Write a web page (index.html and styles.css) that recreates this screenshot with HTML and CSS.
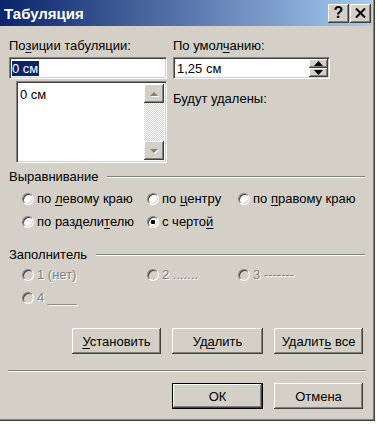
FILE: index.html
```html
<!DOCTYPE html>
<html lang="ru">
  <head>
    <meta charset="UTF-8" />
    <title>Табуляция</title>
    <link rel="stylesheet" href="styles.css">
  </head>
  <body>
    <div class="dialog">
      <!-- Title bar -->
      <div class="titlebar">
        <span class="title">Табуляция</span>
        <div class="caption-btns">
          <div class="cap-btn"><span class="help">?</span></div>
          <div class="cap-btn">
            <svg width="11" height="10" viewBox="0 0 11 10">
              <path d="M1 0.5 L10 9.5 M10 0.5 L1 9.5" stroke="#000" stroke-width="2" fill="none" />
            </svg>
          </div>
        </div>
      </div>

      <div class="body">
        <!-- Tab stop positions -->
        <div class="top">
          <div class="col-left">
            <div class="label">По<u>з</u>иции табуляции:</div>
            <div class="field"><span class="sel">0 см</span></div>
            <div class="listbox">
              <div class="items">0 см</div>
              <div class="scrollbar">
                <div class="sb-btn">
                  <svg width="9" height="6" viewBox="0 0 9 6">
                    <polygon points="5,2 9,6 1,6" fill="#fff" />
                    <polygon points="4,1 8,5 0,5" fill="#808080" />
                  </svg>
                </div>
                <div class="sb-track"></div>
                <div class="sb-btn">
                  <svg width="9" height="6" viewBox="0 0 9 6">
                    <polygon points="1,2 9,2 5,6" fill="#fff" />
                    <polygon points="0,1 8,1 4,5" fill="#808080" />
                  </svg>
                </div>
              </div>
            </div>
          </div>
          <div class="col-right">
            <div class="label">По умол<u>ч</u>анию:</div>
            <div class="field spin">
              <span class="spin-value">1,25 см</span>
              <div class="spin-btns">
                <div class="spin-btn">
                  <svg width="9" height="5" viewBox="0 0 9 5"><polygon points="4.5,0 9,5 0,5" fill="#000" /></svg>
                </div>
                <div class="spin-btn">
                  <svg width="9" height="5" viewBox="0 0 9 5"><polygon points="0,0 9,0 4.5,5" fill="#000" /></svg>
                </div>
              </div>
            </div>
            <div class="note">Будут удалены:</div>
          </div>
        </div>

        <!-- Alignment -->
        <div class="group-head">
          <span>Выравнивание</span>
          <div class="etch"></div>
        </div>
        <div class="options">
          <div class="opt"><span class="radio"></span><span>по <u>л</u>евому краю</span></div>
          <div class="opt"><span class="radio"></span><span>по <u>ц</u>ентру</span></div>
          <div class="opt"><span class="radio"></span><span>по <u>п</u>равому краю</span></div>
          <div class="opt"><span class="radio"></span><span>по раздели<u>т</u>елю</span></div>
          <div class="opt"><span class="radio checked"></span><span>с черто<u>й</u></span></div>
        </div>

        <!-- Leader -->
        <div class="group-head leader-head">
          <span>Заполнитель</span>
          <div class="etch"></div>
        </div>
        <div class="options disabled">
          <div class="opt"><span class="radio"></span><span>1 (нет)</span></div>
          <div class="opt"><span class="radio"></span><span>2 .......</span></div>
          <div class="opt"><span class="radio"></span><span>3 -------</span></div>
          <div class="opt"><span class="radio"></span><span>4 ____</span></div>
        </div>

        <!-- Actions -->
        <div class="btn-row actions">
          <div class="btn"><span><u>У</u>становить</span></div>
          <div class="btn wide"><span>Уд<u>а</u>лить</span></div>
          <div class="btn"><span>Удалит<u>ь</u> все</span></div>
        </div>
        <div class="separator"></div>
        <div class="btn-row">
          <div class="btn wide default"><span>ОК</span></div>
          <div class="btn"><span>Отмена</span></div>
        </div>
      </div>
    </div>
  </body>
</html>
```

FILE: styles.css
```css
/* Page and dialog frame */
body {
  margin: 0;
  background: #fff;
  font-family: "Liberation Sans", Arial, sans-serif;
  font-size: 13px;
  color: #000;
}

u {
  text-decoration: underline;
  text-underline-offset: 2px;
}

.dialog {
  width: 374px;
  height: 420px;
  background: #d4d0c8;
  border-right: 1px solid #404040;
  border-bottom: 1px solid #404040;
  box-shadow: inset -1px -1px #808080;
}

/* Title bar */
.titlebar {
  height: 26px;
  margin-right: 2px;
  padding: 0 1px 0 4px;
  display: flex;
  align-items: center;
  justify-content: space-between;
  background: linear-gradient(to right, #0a246a, #a6caf0);
}

.title {
  color: #fff;
  font-weight: bold;
  font-size: 15px;
}

.caption-btns {
  display: flex;
  gap: 1px;
}

.cap-btn {
  width: 21px;
  height: 19px;
  box-sizing: border-box;
  display: flex;
  align-items: center;
  justify-content: center;
  background: #d4d0c8;
  box-shadow: inset -1px -1px #404040, inset 1px 1px #fff, inset -2px -2px #808080;
}

.help {
  font-weight: bold;
  font-size: 16px;
  line-height: 16px;
}

/* Dialog body */
.body {
  padding: 12px 0 0 9px;
}

.label {
  line-height: 15px;
  height: 15px;
}

.top {
  display: flex;
  gap: 6px;
}

.col-left {
  width: 158px;
}

.col-right {
  width: 157px;
}

/* Sunken edit field */
.field {
  height: 22px;
  margin-top: 4px;
  box-sizing: border-box;
  background: #fff;
  border: 1px solid;
  border-color: #808080 #fff #fff #808080;
  box-shadow: inset 1px 1px #404040, inset -1px -1px #d4d0c8;
  padding: 3px 2px;
  line-height: 15px;
  display: flex;
  align-items: center;
}

.sel {
  background: #0a246a;
  color: #fff;
  padding: 0 1px 0 0;
  line-height: 15px;
}

.spin {
  padding: 2px 1px 2px 3px;
  justify-content: space-between;
}

.spin-btns {
  display: flex;
  flex-direction: column;
  width: 19px;
  height: 18px;
}

.spin-btn {
  flex: 1;
  display: flex;
  align-items: center;
  justify-content: center;
  background: #d4d0c8;
  box-shadow: inset -1px -1px #404040, inset 1px 1px #fff, inset -2px -2px #808080;
}

.note {
  margin-top: 12px;
  line-height: 15px;
}

/* List box with scrollbar */
.listbox {
  width: 151px;
  height: 82px;
  margin: 2px 0 0 7px;
  box-sizing: border-box;
  background: #fff;
  border: 1px solid;
  border-color: #808080 #fff #fff #808080;
  box-shadow: inset 1px 1px #404040, inset -1px -1px #d4d0c8;
  padding: 2px;
  display: flex;
}

.items {
  flex: 1;
  padding: 3px 1px;
  line-height: 15px;
}

.scrollbar {
  width: 20px;
  display: flex;
  flex-direction: column;
}

.sb-btn {
  height: 19px;
  display: flex;
  align-items: center;
  justify-content: center;
  background: #d4d0c8;
  box-shadow: inset -1px -1px #404040, inset 1px 1px #fff, inset -2px -2px #808080;
}

.sb-track {
  flex: 1;
  background: repeating-conic-gradient(#fff 0 25%, #d4d0c8 0 50%) 0 0 / 2px 2px;
}

/* Group headers with etched line */
.group-head {
  display: flex;
  align-items: center;
  gap: 9px;
  height: 15px;
  margin: 6px 9px 0 0;
}

.leader-head {
  margin-top: 14px;
}

.etch {
  flex: 1;
  height: 0;
  border-top: 1px solid #808080;
  border-bottom: 1px solid #fff;
}

/* Radio options */
.options {
  display: grid;
  grid-template-columns: 125px 91px auto;
  grid-auto-rows: 23px;
  padding-left: 13px;
  margin-top: 3px;
}

.leader-head + .options {
  margin-top: 1px;
}

.opt {
  display: flex;
  align-items: center;
  gap: 3px;
  white-space: nowrap;
}

.radio {
  width: 12px;
  height: 12px;
  box-sizing: border-box;
  border-radius: 50%;
  border: 1px solid;
  border-color: #808080 #fff #fff #808080;
  background: #fff;
  box-shadow: inset 1px 1px #404040, inset -1px -1px #d4d0c8;
}

.radio.checked {
  background: radial-gradient(circle, #000 0 2px, #fff 2.5px);
}

.disabled .opt {
  color: #808080;
  text-shadow: 1px 1px #fff;
}

.disabled .radio {
  background: #d4d0c8;
}

/* Push buttons */
.btn-row {
  display: flex;
  justify-content: flex-end;
  gap: 11px;
  padding-right: 11px;
}

.actions {
  margin-top: 19px;
}

.btn {
  width: 89px;
  height: 26px;
  box-sizing: border-box;
  display: flex;
  align-items: center;
  justify-content: center;
  background: #d4d0c8;
  box-shadow: inset -1px -1px #404040, inset 1px 1px #fff, inset -2px -2px #808080;
}

.btn.wide {
  width: 91px;
}

.btn.default {
  border: 1px solid #000;
}

.separator {
  height: 0;
  margin: 16px 8px 11px -1px;
  border-top: 1px solid #808080;
  border-bottom: 1px solid #fff;
}
```
